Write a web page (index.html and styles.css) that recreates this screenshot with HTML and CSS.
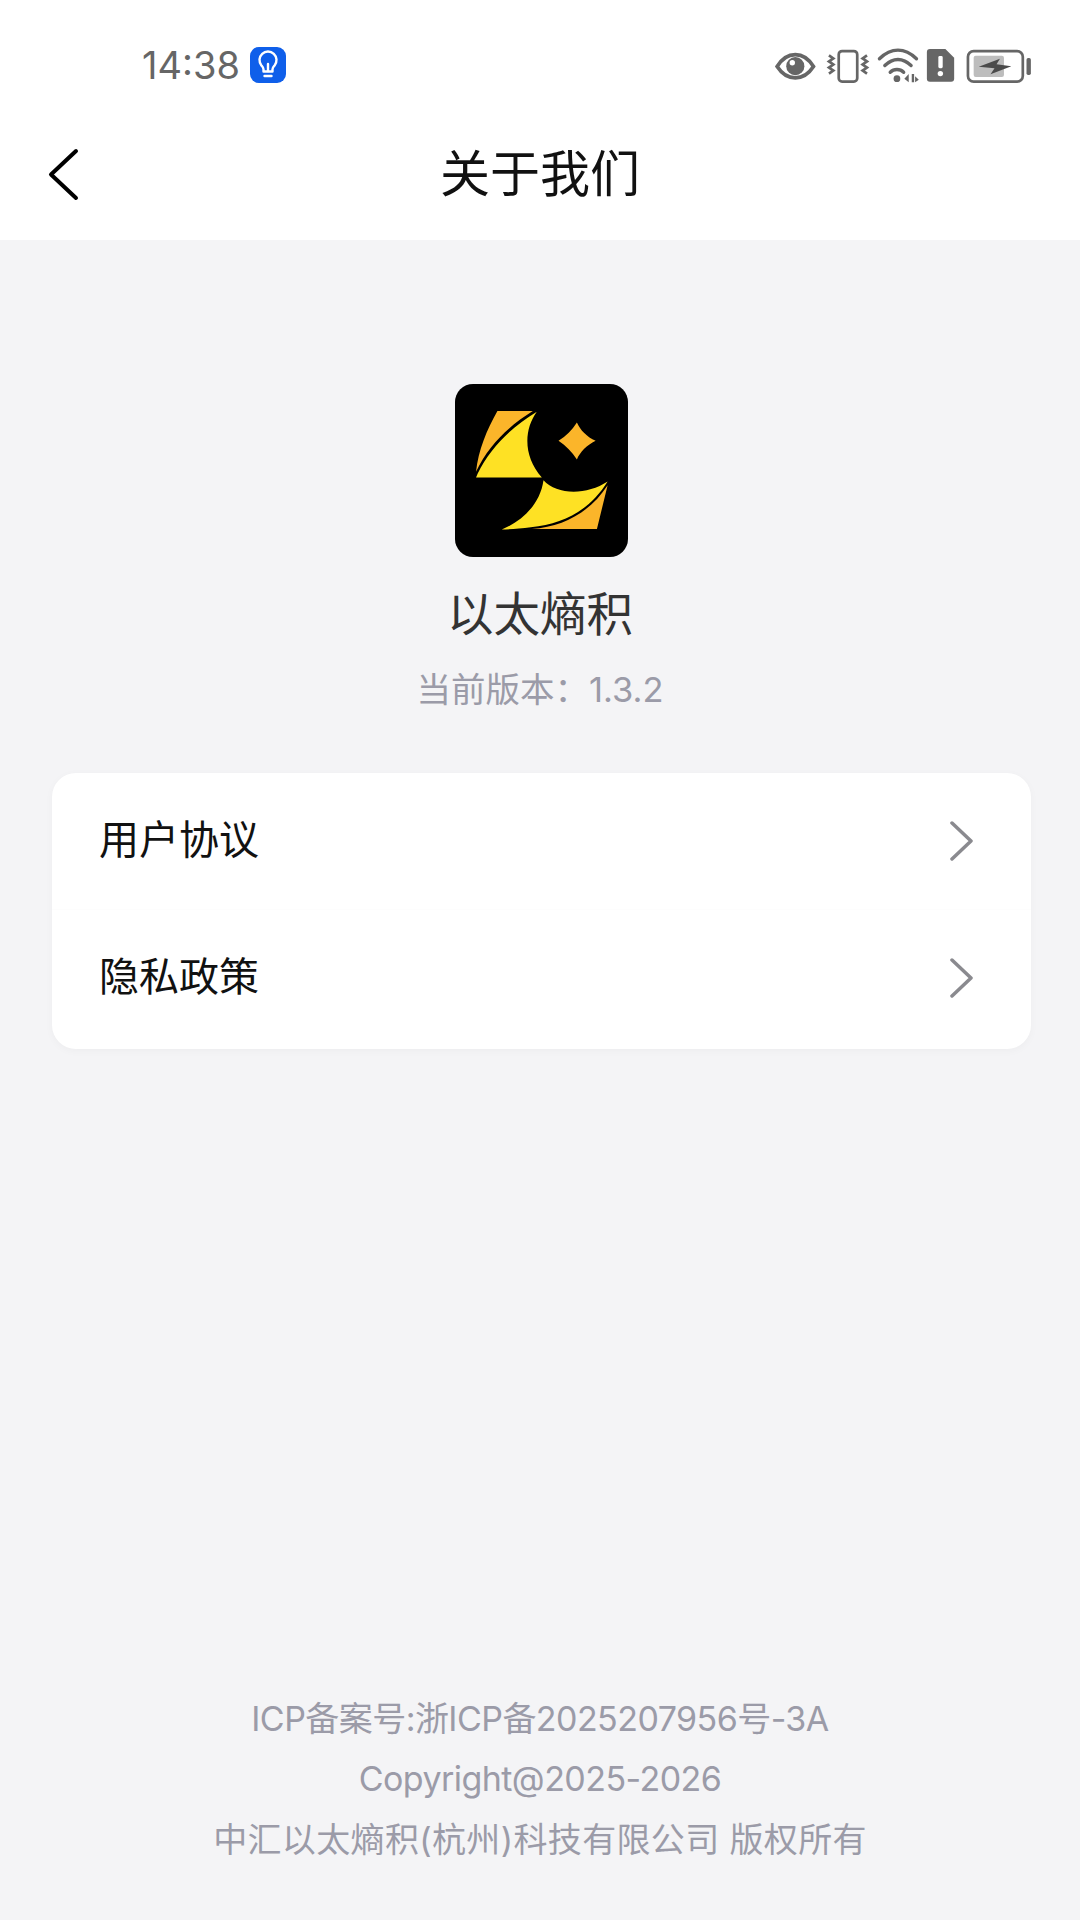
FILE: index.html
```html
<!doctype html>
<html lang="zh-CN">
<head>
<meta charset="utf-8">
<title>关于我们</title>
<meta name="viewport" content="width=device-width, initial-scale=1.0">
<link rel="stylesheet" href="styles.css">
</head>

<body>

<div class="top">
  <div class="statusBar">
    <span class="time">14:38</span>
    <span class="bulb">
      <svg width="36" height="36" viewBox="0 0 36 36" fill="none" stroke="#fff" stroke-width="2.4" stroke-linecap="round" stroke-linejoin="round">
        <path d="M13.5 24.5v-2.2c0-1.6-1.100-2.700-2.100-3.900a8.500 8.500 0 1 1 13.200 0c-1 1.200-2.100 2.300-2.100 3.900v2.200z"/>
        <path d="M18 24v-7"/>
        <path d="M14.500 29h7"/>
      </svg>
    </span>
    <svg class="statusIcons" width="258" height="35" viewBox="50 52 760 104">
      <!-- eye -->
      <path fill="none" stroke="#666" stroke-width="11" d="M56 107C85 60 135 60 164 107C135 152 85 152 56 107Z"/>
      <circle cx="110" cy="106" r="27" fill="#666"/>
      <circle cx="101" cy="96" r="8" fill="#fff"/>
      <!-- vibrate -->
      <rect x="239" y="61" width="55" height="91" rx="10" fill="none" stroke="#666" stroke-width="8"/>
      <path fill="none" stroke="#666" stroke-width="8" d="M210 74l13 9-13 9 13 9-13 9 13 9-13 9"/>
      <path fill="none" stroke="#666" stroke-width="8" d="M323 74l-13 9 13 9-13 9 13 9-13 9 13 9"/>
      <!-- wifi -->
      <g fill="none" stroke="#666" stroke-width="10" stroke-linecap="round">
        <path d="M360 84C395 50 435 50 470 84"/>
        <path d="M376 104C400 80 430 80 454 104"/>
        <path d="M392 124C403 113 421 113 432 124"/>
      </g>
      <circle cx="412" cy="143" r="10" fill="#666"/>
      <path fill="#666" d="M434 143l13-14v25zM456 129h7v25h-7zM466 136l11 10-11 8z"/>
      <!-- sim with alert -->
      <path fill="#666" d="M510 55h46l26 26v62a9 9 0 0 1-9 9h-63a9 9 0 0 1-9-9v-79a9 9 0 0 1 9-9z"/>
      <rect x="535" y="76" width="13" height="36" rx="4" fill="#fff"/>
      <circle cx="541" cy="128" r="8" fill="#fff"/>
      <!-- battery -->
      <rect x="623" y="61" width="163" height="91" rx="17" fill="none" stroke="#666" stroke-width="8"/>
      <rect x="640" y="75" width="90" height="63" rx="6" fill="#bdbdbd"/>
      <path fill="#4a4a4a" d="M655 108L718 84L708 100L752 106L690 130L702 112Z"/>
      <rect x="797" y="82" width="13" height="50" rx="5" fill="#666"/>
    </svg>
  </div>

  <div class="navBar">
    <svg class="back" width="32" height="55" viewBox="0 0 32 55" fill="none" stroke="#000" stroke-width="4" stroke-linecap="round" stroke-linejoin="round">
      <path d="M28 3L3 26.500 28 50"/>
    </svg>
    <span class="navTitle">关于我们</span>
  </div>
</div>

<div class="about">
  <svg class="logo" width="173" height="173" viewBox="45 42 518 518">
    <rect x="45" y="42" width="518" height="518" rx="54" fill="#000"/>
    <path fill="#fbb52a" d="M172 123H278C210 165 145 225 108 305C115 240 140 180 172 123Z"/>
    <path fill="#fee124" d="M290 125C250 180 250 260 305 322H108L113 310C150 235 212 172 290 125Z"/>
    <path fill="#fee124" d="M310 330C350 375 440 375 502 334C450 418 370 462 272 471C240 475 210 477 185 478C250 450 300 400 310 330Z"/>
    <path fill="#fbb52a" d="M502 345L470 476H275C370 470 450 425 502 345Z"/>
    <path fill="#fbb52a" d="M410 157C420 180 440 200 466 212C440 225 420 245 410 268C395 245 378 228 355 212C378 198 395 180 410 157Z"/>
  </svg>
  <div class="appName">以太熵积</div>
  <div class="version">当前版本：1.3.2</div>
</div>

<div class="card">
  <div class="row">
    <span class="rowLabel">用户协议</span>
    <svg width="24" height="40" viewBox="0 0 24 40" fill="none" stroke="#8a8a8f" stroke-width="3.500" stroke-linecap="round" stroke-linejoin="round">
      <path d="M3 2l19 18L3 38"/>
    </svg>
  </div>
  <div class="row">
    <span class="rowLabel">隐私政策</span>
    <svg width="24" height="40" viewBox="0 0 24 40" fill="none" stroke="#8a8a8f" stroke-width="3.500" stroke-linecap="round" stroke-linejoin="round">
      <path d="M3 2l19 18L3 38"/>
    </svg>
  </div>
</div>

<div class="footer">
  <div class="tight">ICP备案号:浙ICP备2025207956号-3A</div>
  <div class="tight">Copyright@2025-2026</div>
  <div class="wide">中汇以太熵积(杭州)科技有限公司 版权所有</div>
</div>

</body>
</html>
```

FILE: styles.css
```css
html, body {
  margin: 0;
  padding: 0;
}
body {
  display: flex;
  flex-direction: column;
  width: 1080px;
  height: 1920px;
  overflow: hidden;
  background: #f4f4f6;
  font-family: Inter, "Noto Sans CJK SC", sans-serif;
}
.top {
  background: #fff;
}
.statusBar {
  display: flex;
  align-items: center;
  height: 100px;
  padding: 30px 48px 0 142px;
  box-sizing: border-box;
}
.time {
  font-size: 38px;
  color: #666;
}
.bulb {
  display: flex;
  width: 36px;
  height: 36px;
  margin-left: 10px;
  border-radius: 9px;
  background: #0f5fea;
}
.statusIcons {
  margin-left: auto;
}
.navBar {
  position: relative;
  display: flex;
  align-items: center;
  justify-content: center;
  height: 140px;
}
.back {
  position: absolute;
  left: 48px;
  top: 48px;
}
.navTitle {
  font-size: 50px;
  color: #111;
}
.about {
  display: flex;
  flex-direction: column;
  align-items: center;
  padding-top: 144px;
}
.logo {
  display: block;
  margin-left: 2px;
}
.appName {
  margin-top: 27px;
  font-size: 46.500px;
  line-height: 60px;
  color: #333;
}
.version {
  margin-top: 24px;
  font-size: 34.500px;
  line-height: 44px;
  color: #9b9ba8;
}
.card {
  margin: 61px 49px 0 52px;
  padding-bottom: 3px;
  border-radius: 24px;
  background: #fff;
  box-shadow: 0 2px 8px rgba(0, 0, 0, 0.03);
}
.row {
  display: flex;
  align-items: center;
  justify-content: space-between;
  height: 136px;
  padding: 0 58px 0 47px;
  border-bottom: 1px solid #fdfdfd;
  font-size: 40px;
  color: #111;
}
.row:last-child {
  border-bottom: 0;
}
.rowLabel {
  margin-bottom: 8px;
}
.footer {
  margin-top: auto;
  padding-bottom: 50px;
  text-align: center;
  font-size: 34px;
  line-height: 60.500px;
  color: #9b9ba8;
}
.tight {
  letter-spacing: -0.550px;
}
.wide {
  letter-spacing: 0.350px;
}
```
